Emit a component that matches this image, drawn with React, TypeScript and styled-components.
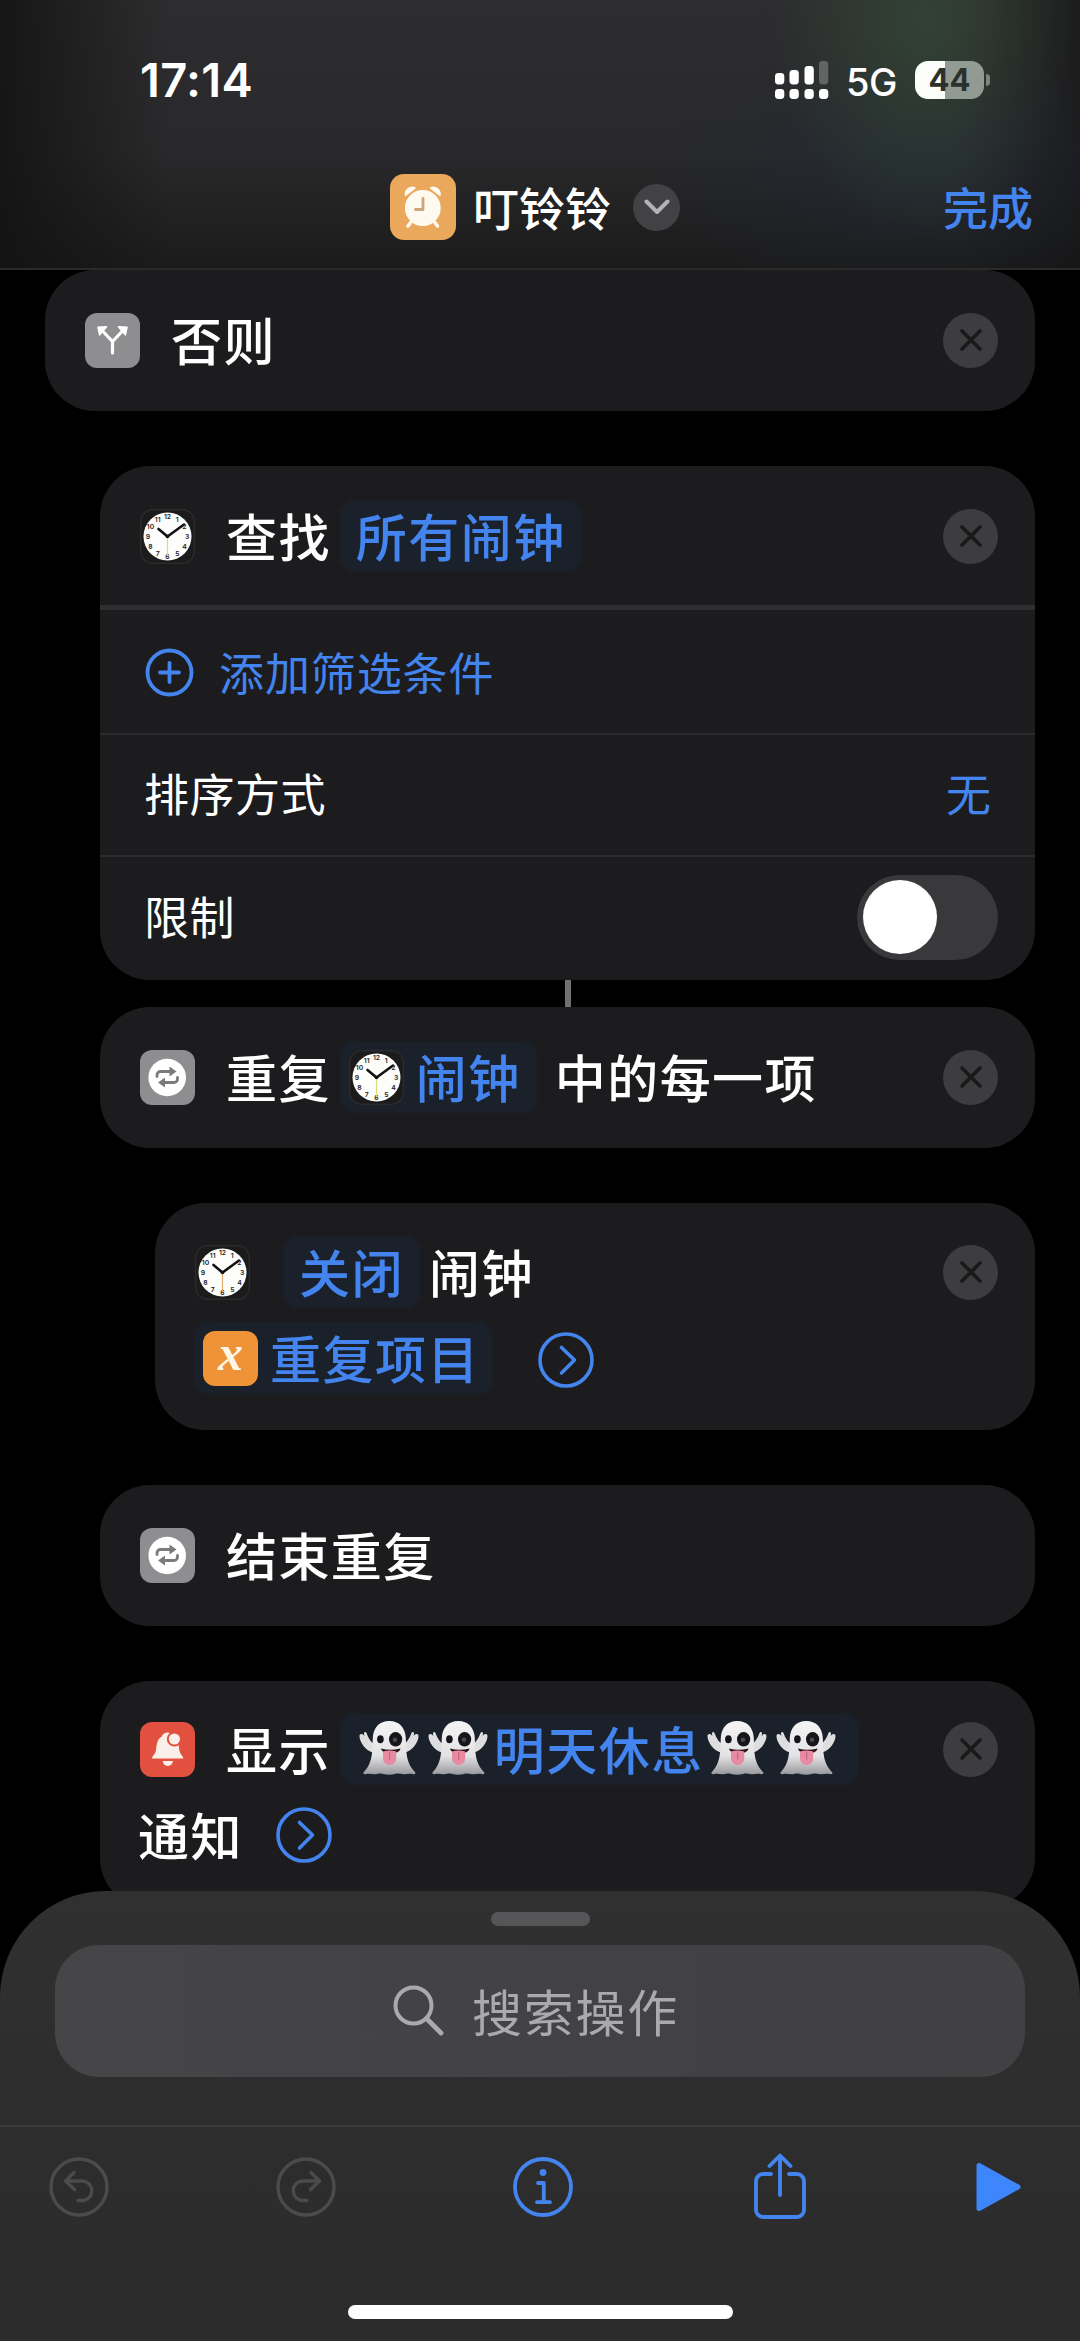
import React from "react";
import styled, { createGlobalStyle } from "styled-components";

const BLUE = "#4484ee";
const CARD = "#1c1c1e";

const GlobalStyle = createGlobalStyle`
  * { box-sizing: border-box; }
  html, body { margin: 0; padding: 0; background: #000; }
  body {
    font-family: Inter, "Noto Sans CJK SC", sans-serif;
    color: #fff;
    -webkit-font-smoothing: antialiased;
  }
  svg { display: block; flex: none; }
`;

const Screen = styled.div`
  position: relative;
  width: 1080px;
  height: 2341px;
  overflow: hidden;
  background: #000;
`;

/* ---------- header ---------- */

const Header = styled.header`
  height: 270px;
  border-bottom: 2px solid #2a2a28;
  background:
    radial-gradient(ellipse 150px 230px at 925px 20px, rgba(54, 80, 56, 0.6), rgba(54, 80, 56, 0) 100%),
    radial-gradient(ellipse 260px 130px at 910px 170px, rgba(30, 40, 56, 0.45), rgba(30, 40, 56, 0) 100%),
    linear-gradient(90deg, rgba(18, 18, 18, 0.85) 0, rgba(18, 18, 18, 0) 170px, rgba(18, 18, 18, 0) 960px, rgba(18, 18, 18, 0.6) 1080px),
    linear-gradient(180deg, #2d2d2f 0, #29292b 150px, #1b1b1c 268px);
`;

const StatusBar = styled.div`
  display: flex;
  align-items: center;
  height: 160px;
  padding-left: 140px;
`;

const Time = styled.div`
  flex: 1;
  font-size: 47px;
  font-weight: 600;
  letter-spacing: 0.3px;
  line-height: 60px;
`;

const Network = styled.div`
  width: 50px;
  margin: 4px 19px 0 17px;
  font-size: 38px;
  font-weight: 500;
  line-height: 50px;
  letter-spacing: -0.5px;
`;

const Battery = styled.div`
  display: flex;
  align-items: center;
  justify-content: center;
  width: 69px;
  height: 38px;
  border-radius: 13px;
  background: linear-gradient(90deg, #fbfdfb 0 30px, #929a94 30px);
  color: #2a302b;
  font-size: 31px;
  font-weight: 700;
  line-height: 38px;
`;

const BatteryTip = styled.div`
  width: 4px;
  height: 12px;
  margin: 0 90px 0 2px;
  border-radius: 0 5px 5px 0;
  background: #7d857f;
`;

const NavBar = styled.div`
  display: flex;
  align-items: center;
  height: 94px;
  padding: 0 47px 0 390px;
`;

const NavTitle = styled.div`
  margin: 0 22px 0 17px;
  padding-top: 3px;
  font-size: 46px;
  font-weight: 500;
  line-height: 60px;
`;

const Chevron = styled.div`
  display: grid;
  place-items: center;
  width: 47px;
  height: 47px;
  border-radius: 50%;
  background: #424244;
`;

const Done = styled.div`
  margin-left: auto;
  padding-top: 5px;
  color: ${BLUE};
  font-size: 45px;
  font-weight: 500;
  line-height: 60px;
`;

/* ---------- action list ---------- */

const List = styled.main`
  display: flex;
  flex-direction: column;
  gap: 55px;
  padding-right: 45px;
`;

const Linked = styled.div`
  display: flex;
  flex-direction: column;
`;

const Card = styled.section<{ $level: number; $top?: number }>`
  margin-left: ${(p) => 45 + p.$level * 55}px;
  border-radius: 50px;
  background: ${CARD};
  padding: ${(p) => p.$top ?? 27}px 0 ${(p) => 55 - (p.$top ?? 27)}px;
`;

const PanelCard = styled(Card)`
  padding: 0;
`;

const PanelHead = styled.div`
  padding: 27px 0 26px;
  border-bottom: 5px solid #2f2f32;
`;

const Line = styled.div`
  display: flex;
  align-items: center;
  height: 86px;
  padding: 0 37px 0 40px;
`;

const Label = styled.span<{ $before?: number }>`
  margin-left: ${(p) => p.$before ?? 31}px;
  padding-top: 5px;
  font-size: 51px;
  font-weight: 500;
  letter-spacing: 1.4px;
  line-height: 66px;
  white-space: nowrap;
`;

const Token = styled.span<{ $before?: number; $left?: number; $right?: number }>`
  display: flex;
  align-items: center;
  height: 70px;
  margin-left: ${(p) => p.$before ?? 10}px;
  padding: 0 ${(p) => p.$right ?? 15}px 0 ${(p) => p.$left ?? 15}px;
  border-radius: 14px;
  background: #1b212b;
  color: ${BLUE};
  font-size: 51px;
  font-weight: 500;
  letter-spacing: 1.5px;
  line-height: 66px;
  white-space: nowrap;
  box-shadow: 0 0 6px #1b212b;
`;

const TokenText = styled.span<{ $gap?: number }>`
  margin-left: ${(p) => p.$gap ?? 0}px;
  padding-top: 5px;
`;

const Tile = styled.span<{ $bg: string }>`
  display: grid;
  place-items: center;
  flex: none;
  width: 55px;
  height: 55px;
  border-radius: 12px;
  background: ${(p) => p.$bg};
`;

const VariableTile = styled(Tile)`
  color: #fff6e6;
  font-family: "Liberation Serif", serif;
  font-size: 50px;
  font-style: italic;
  font-weight: 700;
  line-height: 44px;
  letter-spacing: 0;
  padding-bottom: 11px;
`;

const CloseButton = styled.span`
  display: grid;
  place-items: center;
  width: 55px;
  height: 55px;
  margin-left: auto;
  border-radius: 50%;
  background: #3d3d3f;
`;

const Disclosure = styled.span<{ $before: number; $drop?: number }>`
  margin-left: ${(p) => p.$before}px;
  padding-top: ${(p) => p.$drop ?? 0}px;
`;

const Option = styled.div<{ $h: number }>`
  display: flex;
  align-items: center;
  height: ${(p) => p.$h}px;
  padding: 0 37px 3px 44px;
  font-size: 45px;
  font-weight: 400;
  letter-spacing: 0.9px;

  & + & { border-top: 2px solid #2c2c2e; }
`;

const FilterOption = styled(Option)`
  padding-bottom: 0;
`;

const AddFilter = styled.span`
  margin-left: 25px;
  color: ${BLUE};
`;

const OptionText = styled.span`
  margin-bottom: 3px;
  letter-spacing: 0.5px;
`;

const OptionValue = styled.span`
  margin: 0 0 3px auto;
  padding-right: 6px;
  color: ${BLUE};
`;

const Toggle = styled.span`
  display: flex;
  align-items: center;
  width: 141px;
  height: 85px;
  margin-left: auto;
  padding-left: 6px;
  border-radius: 43px;
  background: #39393c;
`;

const Knob = styled.span`
  width: 74px;
  height: 74px;
  border-radius: 50%;
  background: #fff;
`;

const Connector = styled.div`
  width: 6px;
  height: 27px;
  margin-left: 565px;
  background: #707073;
`;

/* ---------- bottom sheet ---------- */

const Sheet = styled.footer`
  position: absolute;
  left: 0;
  right: 0;
  bottom: 0;
  display: flex;
  flex-direction: column;
  align-items: center;
  height: 450px;
  padding-top: 21px;
  border-radius: 106px 106px 0 0;
  background: linear-gradient(180deg, #303031 0, #2d2d2e 230px, #2c2c2d 100%);
`;

const Grabber = styled.div`
  width: 99px;
  height: 14px;
  border-radius: 7px;
  background: #565658;
`;

const Search = styled.div`
  display: flex;
  align-items: center;
  justify-content: center;
  gap: 28px;
  width: 970px;
  height: 132px;
  margin-top: 19px;
  padding: 0 8px 2px 0;
  border-radius: 44px;
  background: linear-gradient(90deg, #464648, #424247 40%, #414144);
  color: #a9a9ae;
  font-size: 50px;
  letter-spacing: 1.7px;
`;

const Toolbar = styled.div`
  display: grid;
  grid-template-columns: 227px 237px 241px 222px auto;
  align-items: center;
  width: 100%;
  height: 124px;
  margin-top: 48px;
  padding: 0 0 2px 49px;
  border-top: 2px solid #3d3d3e;
`;

const HomeIndicator = styled.div`
  width: 385px;
  height: 14px;
  margin-top: 56px;
  border-radius: 7px;
  background: #fff;
`;

/* ---------- drawings ---------- */

const Signal = () => (
  <svg width="54" height="38" viewBox="0 0 54 38">
    {[0, 14.5, 29.5, 44].map((x, i) => {
      const top = [12, 9, 5, 0][i];
      return (
        <g key={x} fill="#fff">
          <rect x={x} y={top} width="9.3" height={23.5 - top} rx="3.4" opacity={i === 3 ? 0.25 : 1} />
          <rect x={x} y="28" width="9.3" height="10" rx="3.4" />
        </g>
      );
    })}
  </svg>
);

const AlarmIcon = () => (
  <svg width="66" height="66" viewBox="0 0 66 66">
    <rect width="66" height="66" rx="14" fill="#eaa85c" />
    <g fill="#fffaf0">
      <path d="M15.5 21.5a7 7 0 0 1 9.5-7.6z" stroke="#fffaf0" strokeWidth="1.5" strokeLinejoin="round" />
      <path d="M50 21.5a7 7 0 0 0-9.5-7.6z" stroke="#fffaf0" strokeWidth="1.5" strokeLinejoin="round" />
      <circle cx="32.8" cy="34" r="18.6" stroke="#eaa85c" strokeWidth="1.4" />
    </g>
    <path d="M21 48l-3 4M44.5 48l3 4" stroke="#fffaf0" strokeWidth="3.6" strokeLinecap="round" />
    <path d="M33 24.5v11H25.5" fill="none" stroke="#c9a77a" strokeWidth="2.8" strokeLinecap="round" strokeLinejoin="round" />
  </svg>
);

const BranchIcon = () => (
  <Tile $bg="#8e8e90">
    <svg width="55" height="55" viewBox="0 0 55 55">
      <path d="M27.500 40V28.500L18 18.500M27.500 28.500L37 18.500" fill="none" stroke="#fff" strokeWidth="3.2" strokeLinecap="round" strokeLinejoin="round" />
      <path d="M13 14.200l8.600-.4-7 8z M42 14.200l-8.600-.4 7 8z" fill="#fff" stroke="#fff" strokeWidth="1.6" strokeLinejoin="round" />
    </svg>
  </Tile>
);

const RepeatIcon = () => (
  <Tile $bg="#8e8e91">
    <svg width="55" height="55" viewBox="0 0 55 55">
      <circle cx="27.2" cy="27.5" r="18.8" fill="#fff" />
      <g fill="none" stroke="#7b7b7e" strokeWidth="2.8" strokeLinecap="round" strokeLinejoin="round">
        <path d="M17 26.500V25a3.500 3.500 0 0 1 3.500-3.500H31" />
        <path d="M37.500 27.500V29a3.500 3.500 0 0 1-3.500 3.500H23.500" />
      </g>
      <path d="M29.500 16.500l7 5-7 5zM25 27.500l-7 5 7 5z" fill="#7b7b7e" />
    </svg>
  </Tile>
);

const BellIcon = () => (
  <Tile $bg="#e2503f">
    <svg width="55" height="55" viewBox="0 0 55 55">
      <path
        d="M12 36.500c0-2.500 3.200-3.800 4-8.500.8-5 .6-10.500 5.800-13.500 1-3 3.200-4 5.700-4 2.200 0 3.900 1 4.800 3C38 16.500 38.600 22 39.300 28c.8 4.700 4 6 4 8.500z"
        fill="#fbefe9"
      />
      <circle cx="34.4" cy="17" r="6.600" fill="#fbefe9" stroke="#e2503f" strokeWidth="2" />
      <path d="M22.800 39h10a5 5 0 0 1-10 0z" fill="#fbefe9" />
    </svg>
  </Tile>
);

const ClockIcon = ({ hand = "#d9dc7a" }: { hand?: string }) => (
  <svg width="55" height="55" viewBox="0 0 55 55">
    <rect x="0.7" y="0.7" width="53.6" height="53.6" rx="12" fill="#1b1b1c" stroke="#2b2b2c" strokeWidth="1.4" />
    <circle cx="27.5" cy="27.5" r="24" fill="#fdfdfb" />
    <g fill="#222" fontFamily="Inter, sans-serif" fontSize="6.8" fontWeight="600" textAnchor="middle" letterSpacing="0">
      {Array.from({ length: 12 }, (_, i) => {
        const a = ((i + 1) * Math.PI) / 6;
        return (
          <text key={i} x={27.5 + 19.6 * Math.sin(a)} y={29.9 - 19.6 * Math.cos(a)}>
            {i + 1}
          </text>
        );
      })}
    </g>
    <path d="M27.500 27.500V47" stroke={hand} strokeWidth="1.2" />
    <path d="M27.500 27.500L18.500 20M27.500 27.500L44 15.500" stroke="#111" strokeWidth="2.6" strokeLinecap="round" />
    <circle cx="27.5" cy="27.5" r="1.8" fill="#111" />
  </svg>
);

const Close = () => (
  <CloseButton>
    <svg width="24" height="24" viewBox="0 0 24 24">
      <path d="M3 3l18 18M21 3L3 21" stroke="#19191a" strokeWidth="3.6" strokeLinecap="round" />
    </svg>
  </CloseButton>
);

const ArrowCircle = () => (
  <svg width="56" height="56" viewBox="0 0 56 56" fill="none" stroke={BLUE} strokeLinecap="round" strokeLinejoin="round">
    <circle cx="28" cy="28" r="26" strokeWidth="3.6" />
    <path d="M23.500 15.500L36.500 28 23.500 41" strokeWidth="3.6" />
  </svg>
);

const PlusCircle = () => (
  <svg width="50" height="50" viewBox="0 0 50 50" fill="none" stroke={BLUE} strokeLinecap="round">
    <circle cx="25.5" cy="25.5" r="22" strokeWidth="3.8" />
    <path d="M25.500 16v19M16 25.500h19" strokeWidth="3.8" />
  </svg>
);

const Ghost = () => (
  <svg width="69" height="60" viewBox="0 0 69 60">
    <defs>
      <linearGradient id="ghostBody" x1="0" y1="0" x2="0" y2="1">
        <stop offset="0" stopColor="#f4f4f4" />
        <stop offset="0.65" stopColor="#e3e3e5" />
        <stop offset="1" stopColor="#98989c" />
      </linearGradient>
    </defs>
    <g fill="#dededf">
      <path d="M19 25C15 24 12.500 19 10.700 14.500 9.700 12.300 7.800 12.800 8 15l.3 2C6.500 14.300 3.300 14.500 3.500 17.500 3.800 23 9 31.500 18 34z" />
      <path d="M47 25c4-1 6.500-6 8.300-10.500 1-2.200 2.900-1.700 2.700.5l-.3 2c1.800-2.700 5-2.500 4.800.5C62.200 23 57 31.500 48 34z" />
    </g>
    <path
      d="M33.300 2C23.500 2 17.300 8.500 16.800 19c-.3 7-.2 13-1.300 18.500C14 45.500 11 49.500 7.800 53c-1.200 1.600.2 2.600 2 2.200 4-1 6.200.4 9.700 0 3-.4 4.500-1 7.500-.2 4 1 8 1 12 0 3-.8 5-.2 8 .2 3.500.4 6-1 10 0 1.800.4 3.200-.6 2-2.200C55.800 49.500 52.500 45.500 51 37.500 50 32 50.100 26 49.800 19 49.300 8.500 43 2 33.300 2z"
      fill="url(#ghostBody)"
    />
    <ellipse cx="24.4" cy="20.3" rx="3.3" ry="4" fill="#16161a" />
    <ellipse cx="39.6" cy="20.3" rx="6.600" ry="7.2" fill="#16161a" />
    <circle cx="39" cy="20.8" r="2.3" fill="#4a4a4f" />
    <path d="M25 29.500c6 1.600 13 1.600 19.500 0-.8 3.500-4.500 5-9.800 5s-8.900-1.500-9.700-5z" fill="#2a1216" />
    <path d="M27 32.500c4-1.200 9-1.200 13.200 0v6.800a6.600 6.600 0 0 1-13.200 0z" fill="#e78aa2" />
    <path d="M33.600 33.500v6.500" stroke="#c8617d" strokeWidth="1.2" strokeLinecap="round" />
  </svg>
);

const SearchIcon = () => (
  <svg width="51" height="51" viewBox="0 0 51 51" fill="none" stroke="#a9a9ae" strokeWidth="4" strokeLinecap="round">
    <circle cx="20.5" cy="20.5" r="18" />
    <path d="M33.500 33.500L48 48" strokeWidth="4.8" />
  </svg>
);

const TurnIcon = ({ flip }: { flip?: boolean }) => (
  <svg width="60" height="60" viewBox="0 0 60 60" fill="none" stroke="#4b4b4c" strokeWidth="3.4" strokeLinecap="round" strokeLinejoin="round">
    <circle cx="30" cy="30" r="28" />
    <g transform={flip ? "translate(60 0) scale(-1 1)" : undefined}>
      <path d="M25 15.500l-8.500 8.500 9 8.500M16.500 24h17.500a9.800 9.800 0 0 1 0 19.500H29" />
    </g>
  </svg>
);

const InfoIcon = () => (
  <svg width="60" height="60" viewBox="0 0 60 60" fill="none" stroke={BLUE} strokeWidth="3.8" strokeLinecap="round" strokeLinejoin="round">
    <circle cx="30" cy="30" r="28" />
    <path d="M25 26h5.800V45M24 45.200h13" />
    <circle cx="30" cy="15.5" r="3.4" fill={BLUE} stroke="none" />
  </svg>
);

const ShareIcon = () => (
  <svg width="52" height="68" viewBox="0 0 52 68" fill="none" stroke={BLUE} strokeWidth="3.8" strokeLinecap="round" strokeLinejoin="round">
    <path d="M17 21H9a7 7 0 0 0-7 7v29a7 7 0 0 0 7 7h34a7 7 0 0 0 7-7V28a7 7 0 0 0-7-7H35" />
    <path d="M26 42V2.500M15.500 13L26 2.500 36.500 13" />
  </svg>
);

const PlayIcon = () => (
  <svg width="45" height="50" viewBox="0 0 45 50">
    <path d="M3 3.500v43L42 25z" fill="#3d86fb" stroke="#3d86fb" strokeWidth="5" strokeLinejoin="round" />
  </svg>
);

/* ---------- page ---------- */

export default function App() {
  return (
    <>
      <GlobalStyle />
      <Screen>
        <Header>
          <StatusBar>
            <Time>17:14</Time>
            <Signal />
            <Network>5G</Network>
            <Battery>44</Battery>
            <BatteryTip />
          </StatusBar>
          <NavBar>
            <AlarmIcon />
            <NavTitle>叮铃铃</NavTitle>
            <Chevron>
              <svg width="26" height="16" viewBox="0 0 26 16">
                <path d="M2.500 2.500L13 13 23.500 2.500" fill="none" stroke="#b4b4b6" strokeWidth="4" strokeLinecap="round" strokeLinejoin="round" />
              </svg>
            </Chevron>
            <Done>完成</Done>
          </NavBar>
        </Header>

        <List>
          <Card $level={0}>
            <Line>
              <BranchIcon />
              <Label>否则</Label>
              <Close />
            </Line>
          </Card>

          <Linked>
            <PanelCard $level={1}>
              <PanelHead>
                <Line>
                  <ClockIcon />
                  <Label>查找</Label>
                  <Token>
                    <TokenText>所有闹钟</TokenText>
                  </Token>
                  <Close />
                </Line>
              </PanelHead>
              <FilterOption $h={123}>
                <PlusCircle />
                <AddFilter>添加筛选条件</AddFilter>
              </FilterOption>
              <Option $h={122} style={undefined}>
                <OptionText>排序方式</OptionText>
                <OptionValue>无</OptionValue>
              </Option>
              <Option $h={125}>
                <OptionText>限制</OptionText>
                <Toggle>
                  <Knob />
                </Toggle>
              </Option>
            </PanelCard>
            <Connector />
            <Card $level={1}>
              <Line>
                <RepeatIcon />
                <Label>重复</Label>
                <Token $left={8}>
                  <ClockIcon />
                  <TokenText $gap={12}>闹钟</TokenText>
                </Token>
                <Label $before={19}>中的每一项</Label>
                <Close />
              </Line>
            </Card>
          </Linked>

          <Card $level={2} $top={26}>
            <Line>
              <ClockIcon hand="#e8b06a" />
              <Token $before={34}>
                <TokenText>关闭</TokenText>
              </Token>
              <Label $before={10}>闹钟</Label>
              <Close />
            </Line>
            <Line>
              <Token $before={0} $left={8} $right={12}>
                <VariableTile $bg="#ee9337">x</VariableTile>
                <TokenText $gap={12}>重复项目</TokenText>
              </Token>
              <Disclosure $before={46} $drop={3}>
                <ArrowCircle />
              </Disclosure>
            </Line>
          </Card>

          <Card $level={1}>
            <Line>
              <RepeatIcon />
              <Label>结束重复</Label>
            </Line>
          </Card>

          <Card $level={1} $top={25}>
            <Line>
              <BellIcon />
              <Label>显示</Label>
              <Token $right={16}>
                <Ghost />
                <Ghost />
                <TokenText>明天休息</TokenText>
                <Ghost />
                <Ghost />
              </Token>
              <Close />
            </Line>
            <Line>
              <Label $before={-2}>通知</Label>
              <Disclosure $before={33}>
                <ArrowCircle />
              </Disclosure>
            </Line>
          </Card>
        </List>

        <Sheet>
          <Grabber />
          <Search>
            <SearchIcon />
            搜索操作
          </Search>
          <Toolbar>
            <TurnIcon />
            <TurnIcon flip />
            <InfoIcon />
            <ShareIcon />
            <PlayIcon />
          </Toolbar>
          <HomeIndicator />
        </Sheet>
      </Screen>
    </>
  );
}
